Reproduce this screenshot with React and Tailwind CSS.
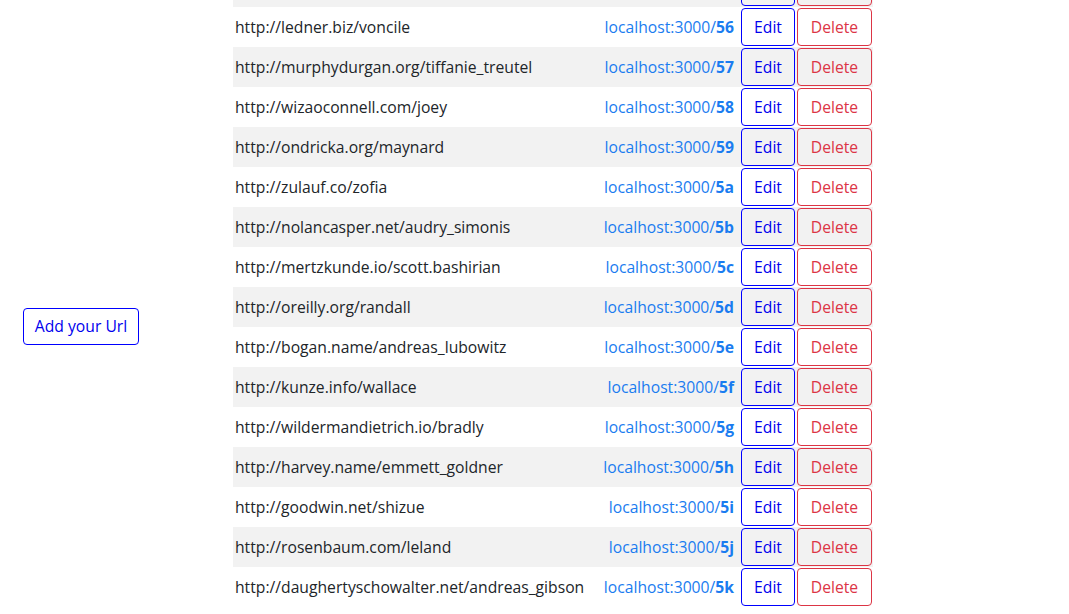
import React from 'react';

const rows = [
    { url: 'http://ledner.biz/voncile', code: '56' },
    { url: 'http://murphydurgan.org/tiffanie_treutel', code: '57' },
    { url: 'http://wizaoconnell.com/joey', code: '58' },
    { url: 'http://ondricka.org/maynard', code: '59' },
    { url: 'http://zulauf.co/zofia', code: '5a' },
    { url: 'http://nolancasper.net/audry_simonis', code: '5b' },
    { url: 'http://mertzkunde.io/scott.bashirian', code: '5c' },
    { url: 'http://oreilly.org/randall', code: '5d' },
    { url: 'http://bogan.name/andreas_lubowitz', code: '5e' },
    { url: 'http://kunze.info/wallace', code: '5f' },
    { url: 'http://wildermandietrich.io/bradly', code: '5g' },
    { url: 'http://harvey.name/emmett_goldner', code: '5h' },
    { url: 'http://goodwin.net/shizue', code: '5i' },
    { url: 'http://rosenbaum.com/leland', code: '5j' },
    { url: 'http://daughertyschowalter.net/andreas_gibson', code: '5k' },
];

function App() {
    return (
        <div className="h-[614px] overflow-hidden bg-white text-[#212529] text-[15.7px] font-['Open_Sans','Noto_Sans',sans-serif]">
            <div className="flex">
                {/* left side */}
                <div className="w-[233px] pl-[23px] pt-[308px]">
                    <button className="w-[116px] h-[37px] pt-[1px] border border-[#0000ff] rounded-[4px] text-[#0000ee] bg-white">
                        Add your Url
                    </button>
                </div>

                {/* url list, scrolled: row above the first is only partly shown */}
                <div className="mt-[-33px] w-[640px]">
                    <div className="flex items-center h-10 bg-[#f2f2f2]">
                        <div className="w-[504px]"></div>
                        <div className="ml-[4px] w-[54px] h-[38px] border border-[#0000ff] rounded-[4px]"></div>
                        <div className="ml-[2px] w-[75px] h-[38px] border border-[#dc3545] rounded-[4px]"></div>
                    </div>
                    {rows.map((row, i) => (
                        <div key={row.code} className={`flex items-center h-10 ${i % 2 === 1 ? 'bg-[#f2f2f2]' : 'bg-white'}`}>
                            <div className="w-[369px] pl-[2px] pt-[2px] whitespace-nowrap">{row.url}</div>
                            <div className="w-[135px] pr-[3px] pt-[2px] text-right whitespace-nowrap text-[#1a7cf0]">
                                localhost:3000/<span className="font-bold">{row.code}</span>
                            </div>
                            <button className="ml-[4px] w-[54px] h-[38px] pt-[2px] border border-[#0000ff] rounded-[4px] text-[#0000ee]">
                                Edit
                            </button>
                            <button className="ml-[2px] w-[75px] h-[38px] pt-[2px] border border-[#dc3545] rounded-[4px] text-[#dc3545]">
                                Delete
                            </button>
                        </div>
                    ))}
                </div>
            </div>
        </div>
    );
}

export default App;
